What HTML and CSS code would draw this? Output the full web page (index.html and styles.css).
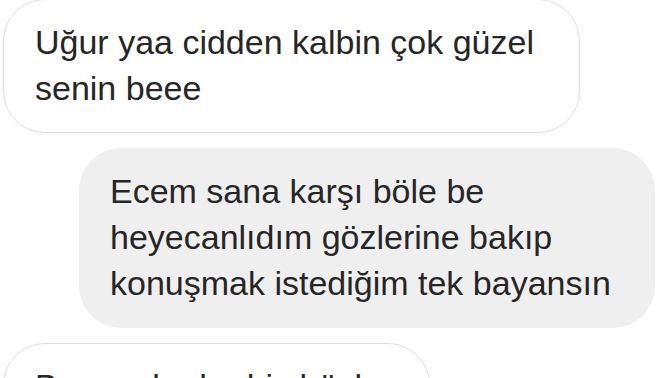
FILE: index.html
```html
<!DOCTYPE html>
<html>
<head>
    <link rel="stylesheet" href="styles.css">
</head>
<body>
    <div class="thread">
        <div class="msg msg-in msg-first">
            <div class="bubble bubble-in w-577">Uğur yaa cidden kalbin çok güzel senin beee</div>
        </div>
        <div class="msg msg-out">
            <div class="bubble bubble-out w-576">Ecem sana karşı böle be heyecanlıdım gözlerine bakıp konuşmak istediğim tek bayansın</div>
        </div>
        <div class="msg msg-in">
            <div class="bubble bubble-in w-427">Bu ana kadar hiç böyle bir şey duymadım</div>
        </div>
    </div>
</body>
</html>
```

FILE: styles.css
```css
:root {
    --text-color: #262626;
    --border-color: #dedede;
    --out-bg: #efefef;
}
html, body {
    margin: 0;
    padding: 0;
    background: #fff;
    overflow: hidden;
}
body {
    width: 672px;
    height: 378px;
    font-family: "Liberation Sans", Arial, sans-serif;
    color: var(--text-color);
}
.thread {
    display: flex;
    flex-direction: column;
    gap: 15px;
}
.msg {
    display: flex;
}
.msg-first {
    margin-top: -1px;
}
.msg-in {
    justify-content: flex-start;
    padding-left: 3px;
}
.msg-out {
    justify-content: flex-end;
    padding-right: 17px;
}
.bubble {
    box-sizing: border-box;
    font-size: 34px;
    line-height: 46px;
    padding: 20px 20px 21px 31px;
    border-radius: 42px;
}
.bubble-in {
    background: #fff;
    border: 1.5px solid var(--border-color);
    padding-top: 19px;
}
.bubble-out {
    background: var(--out-bg);
    padding-bottom: 22px;
}
.w-577 { width: 577px; }
.w-576 { width: 576px; }
.w-427 { width: 427px; }
```
